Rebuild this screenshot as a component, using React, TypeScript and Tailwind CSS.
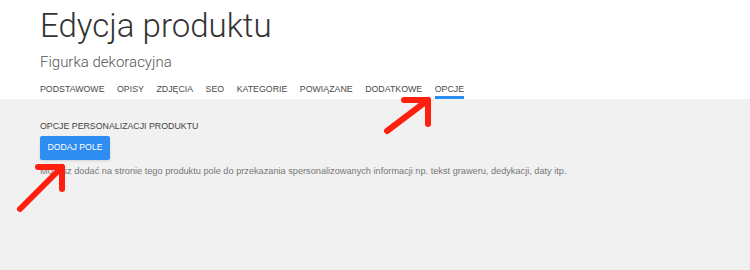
const tabs = ['PODSTAWOWE', 'OPISY', 'ZDJĘCIA', 'SEO', 'KATEGORIE', 'POWIĄZANE', 'DODATKOWE', 'OPCJE'];

function Arrow({ x1, y1, x2, y2, hx, vy }: { x1: number; y1: number; x2: number; y2: number; hx: number; vy: number }) {
  return (
    <g stroke="#ff1f0f" strokeWidth={6} strokeLinecap="round" strokeLinejoin="round" fill="none">
      <path d={`M${x1} ${y1} L${x2} ${y2}`} />
      <path d={`M${hx} ${y2} L${x2} ${y2} L${x2} ${vy}`} />
    </g>
  );
}

export default function App() {
  return (
    <div className="relative w-[750px] h-[270px] overflow-hidden flex flex-col bg-[#f1f1f1] font-['Liberation_Sans',Arial,sans-serif]">
      <div className="bg-white px-10">
        <h1 className="font-['Roboto',sans-serif] font-light text-[33px] leading-[40px] text-[#333] pt-[6px]">
          Edycja produktu
        </h1>
        <p className="font-['Roboto',sans-serif] font-light text-[15px] leading-5 text-[#555] mt-[6px]">
          Figurka dekoracyjna
        </p>
        <nav className="flex gap-[12.5px] mt-[11px]">
          {tabs.map((t) => (
            <div
              key={t}
              className={`text-[8.8px] leading-[12px] pb-[1px] border-b-[3px] text-[#4a4a4a] ${
                t === 'OPCJE' ? 'border-[#2b8ef0]' : 'border-transparent'
              }`}
            >
              {t}
            </div>
          ))}
        </nav>
      </div>
      <div className="flex-1 px-10 pt-[21px]">
        <p className="text-[8.8px] leading-3 text-[#444]">OPCJE PERSONALIZACJI PRODUKTU</p>
        <button
          type="button"
          className="mt-[4px] w-[70px] h-[24px] rounded-[2px] bg-[#2f8cf0] text-white text-[8.7px] shadow-sm"
        >
          DODAJ POLE
        </button>
        <p className="mt-[5px] text-[9.2px] leading-3 text-[#777]">
          Możesz dodać na stronie tego produktu pole do przekazania spersonalizowanych informacji np. tekst graweru, dedykacji, daty itp.
        </p>
      </div>
      <svg className="absolute inset-0 pointer-events-none" width={750} height={270}>
        <Arrow x1={387} y1={131} x2={428} y2={100} hx={404} vy={124} />
        <Arrow x1={20} y1={209} x2={62} y2={167} hx={38} vy={189} />
      </svg>
    </div>
  );
}
